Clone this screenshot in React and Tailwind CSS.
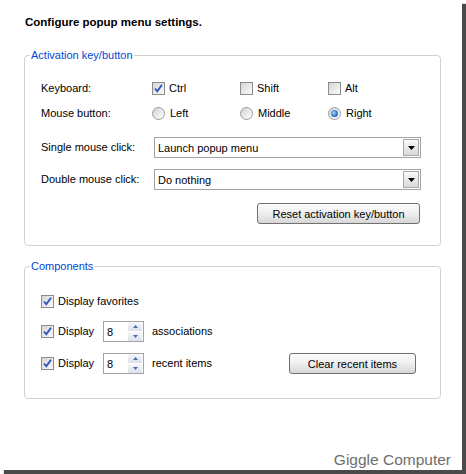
import React from "react";

function Check({ checked }) {
  return (
    <span className="w-[13px] h-[13px] shrink-0 border border-[#8c8c8c] bg-gradient-to-br from-[#d6d6d2] to-[#fafafa] flex items-center justify-center">
      {checked && (
        <svg width="11" height="11" viewBox="0 0 11 11">
          <path d="M2 5.5 L4.3 8.3 L9 1.8" stroke="#2f55c2" strokeWidth="1.9" fill="none" strokeLinejoin="miter" />
        </svg>
      )}
    </span>
  );
}

function Radio({ on }) {
  return (
    <span className="w-[13px] h-[13px] shrink-0 rounded-full border border-[#9a9a9a] bg-gradient-to-br from-[#d4d4d4] to-[#ffffff] flex items-center justify-center">
      {on && (
        <span className="w-[7px] h-[7px] rounded-full bg-[radial-gradient(circle_at_40%_40%,#a8d4ff,#2a6fd0_60%,#174a9a)]" />
      )}
    </span>
  );
}

function Combo({ value }) {
  return (
    <div className="w-[267px] h-[21px] border border-[#a3a3a3] bg-white flex items-center">
      <span className="flex-1 pl-[3px] leading-[14px]">{value}</span>
      <span className="w-[16px] h-[17px] mr-[1px] border border-[#a8a8a8] bg-gradient-to-b from-[#f8f8f8] to-[#dadada] flex items-center justify-center">
        <svg width="7" height="4" viewBox="0 0 7 4">
          <path d="M0 0 H7 L3.5 4 Z" fill="#000" />
        </svg>
      </span>
    </div>
  );
}

function Button({ children, w }) {
  return (
    <div className={`${w} h-[21px] rounded-[3px] border border-[#707070] bg-gradient-to-b from-[#fcfcfc] via-[#efefef] to-[#d6d6d6] flex items-center justify-center leading-[14px]`}>
      {children}
    </div>
  );
}

function Spin() {
  return (
    <div className="w-[41px] h-[21px] border border-[#a3a3a3] bg-white flex items-center">
      <span className="flex-1 pl-[3px] leading-[14px]">8</span>
      <span className="w-[14px] h-[19px] mr-[1px] flex flex-col gap-px">
        <span className="flex-1 bg-gradient-to-b from-[#f6f8fc] to-[#d9e0ec] flex items-center justify-center">
          <svg width="5" height="3" viewBox="0 0 5 3">
            <path d="M0 3 L2.5 0 L5 3 Z" fill="#4d6aa8" />
          </svg>
        </span>
        <span className="flex-1 bg-gradient-to-b from-[#f6f8fc] to-[#d9e0ec] flex items-center justify-center">
          <svg width="5" height="3" viewBox="0 0 5 3">
            <path d="M0 0 H5 L2.5 3 Z" fill="#4d6aa8" />
          </svg>
        </span>
      </span>
    </div>
  );
}

function Group({ title, h, children, className = "" }) {
  return (
    <div className={`relative ${h} mx-[24px] w-[417px] border border-[#d3d3cc] rounded-[4px] ${className}`}>
      <span className="absolute -top-[8px] left-[5px] px-[1px] bg-white text-[#0046d5] leading-[14px]">
        {title}
      </span>
      {children}
    </div>
  );
}

export default function App() {
  return (
    <div className="w-[466px] h-[474px] bg-white font-['Liberation_Sans',Arial,sans-serif] text-[11px] text-black">
      <div className="w-[462px] h-[470px] bg-white shadow-[4px_4px_1px_#4a4a4a] flex flex-col">
        <div className="pt-[15px] pl-[25px] font-bold text-[11.5px] leading-[14px]">
          Configure popup menu settings.
        </div>

        <Group title="Activation key/button" h="h-[191px]" className="mt-[26px]">
          <div className="flex flex-col pt-[24px] pl-[16px] pr-[19px]">
            <div className="flex items-center h-4">
              <span className="w-[111px]">Keyboard:</span>
              <span className="w-[88px] flex items-center gap-[4px]"><Check checked />Ctrl</span>
              <span className="w-[88px] flex items-center gap-[4px]"><Check />Shift</span>
              <span className="flex items-center gap-[4px]"><Check />Alt</span>
            </div>
            <div className="flex items-center h-4 mt-[9px]">
              <span className="w-[111px]">Mouse button:</span>
              <span className="w-[88px] flex items-center gap-[5px]"><Radio />Left</span>
              <span className="w-[88px] flex items-center gap-[5px]"><Radio />Middle</span>
              <span className="flex items-center gap-[5px]"><Radio on />Right</span>
            </div>
            <div className="flex items-center mt-[16px]">
              <span className="w-[113px]">Single mouse click:</span>
              <Combo value="Launch popup menu" />
            </div>
            <div className="flex items-center mt-[11px]">
              <span className="w-[113px]">Double mouse click:</span>
              <Combo value="Do nothing" />
            </div>
            <div className="flex justify-end mt-[13px] mr-[1px]">
              <Button w="w-[163px]">Reset activation key/button</Button>
            </div>
          </div>
        </Group>

        <Group title="Components" h="h-[133px]" className="mt-[20px]">
          <div className="flex flex-col pt-[26px] pl-[16px] pr-[24px]">
            <div className="flex items-center h-4 gap-[4px]">
              <Check checked />
              <span>Display favorites</span>
            </div>
            <div className="flex items-center mt-[12px]">
              <Check checked />
              <span className="ml-[4px] w-[45px]">Display</span>
              <Spin />
              <span className="ml-[8px]">associations</span>
            </div>
            <div className="flex items-center mt-[11px]">
              <Check checked />
              <span className="ml-[4px] w-[45px]">Display</span>
              <Spin />
              <span className="ml-[8px]">recent items</span>
              <span className="ml-auto">
                <Button w="w-[127px]">Clear recent items</Button>
              </span>
            </div>
          </div>
        </Group>

        <div className="flex-1" />
        <div className="flex justify-end pr-[11px] pb-[1px] text-[15.5px] leading-[18px] text-[#6e6e6e]">
          Giggle Computer
        </div>
      </div>
    </div>
  );
}
